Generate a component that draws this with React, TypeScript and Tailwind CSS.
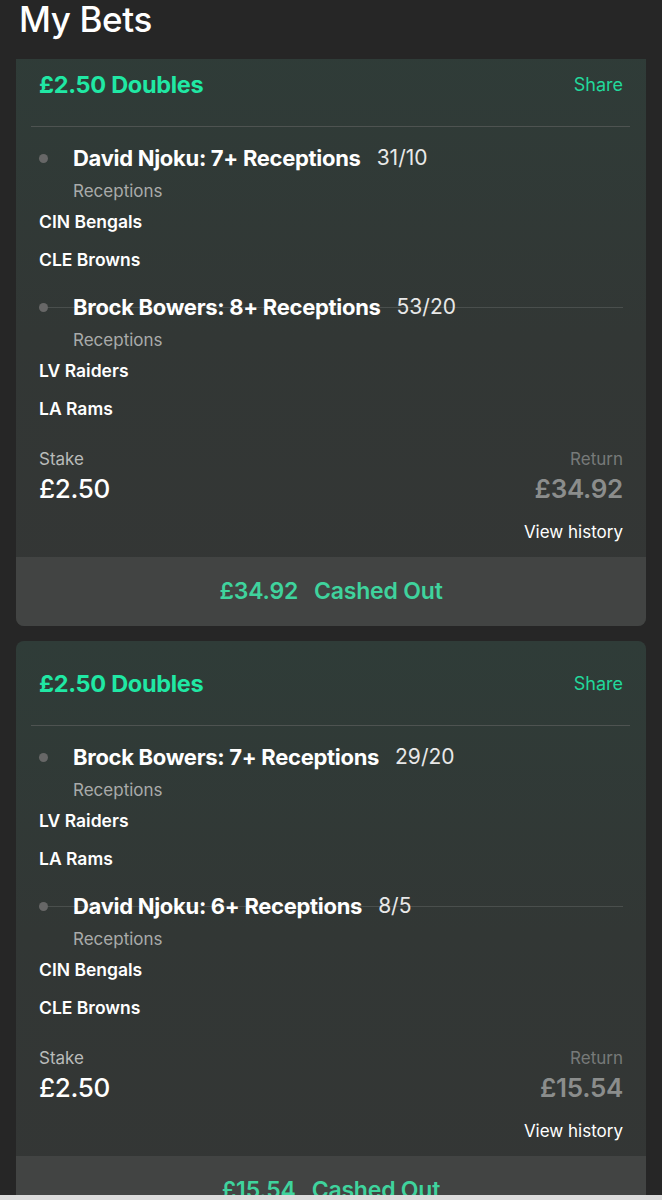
import React from "react"

type Leg = {
  title: string
  odds: string
  market: string
  home: string
  away: string
}

type Bet = {
  stake: string
  ret: string
  legs: Leg[]
}

const bets: Bet[] = [
  {
    stake: "£2.50",
    ret: "£34.92",
    legs: [
      { title: "David Njoku: 7+ Receptions", odds: "31/10", market: "Receptions", home: "CIN Bengals", away: "CLE Browns" },
      { title: "Brock Bowers: 8+ Receptions", odds: "53/20", market: "Receptions", home: "LV Raiders", away: "LA Rams" },
    ],
  },
  {
    stake: "£2.50",
    ret: "£15.54",
    legs: [
      { title: "Brock Bowers: 7+ Receptions", odds: "29/20", market: "Receptions", home: "LV Raiders", away: "LA Rams" },
      { title: "David Njoku: 6+ Receptions", odds: "8/5", market: "Receptions", home: "CIN Bengals", away: "CLE Browns" },
    ],
  },
]

function Selection({ leg, first }: { leg: Leg; first: boolean }) {
  return (
    <div className={first ? "mt-[17px]" : "mt-[21px]"}>
      <div className="relative flex items-center h-[28px]">
        {/* connector line behind the second leg */}
        {!first && (
          <div className="absolute left-[1px] right-0 top-1/2 h-px bg-[#4a4f4d]" />
        )}
        <div className="relative w-[34px] shrink-0">
          <div className="w-[9px] h-[9px] rounded-full bg-[#676767]" />
        </div>
        <span className="relative text-[22px] font-bold text-white leading-[28px] tracking-[-0.3px]">
          {leg.title}
        </span>
        <span className="relative ml-4 text-[21px] text-[#e8e8e8] leading-[28px]">
          {leg.odds}
        </span>
      </div>
      <div className="mt-[7px] pl-[34px] text-[17px] leading-[24px] text-[#a9abaa]">
        {leg.market}
      </div>
      <div className="mt-[7px] text-[17.5px] leading-[24px] font-semibold text-white">
        {leg.home}
      </div>
      <div className="mt-[14px] text-[17.5px] leading-[24px] font-semibold text-white">
        {leg.away}
      </div>
    </div>
  )
}

function BetCard({ bet }: { bet: Bet }) {
  return (
    <div className="rounded-[8px] overflow-hidden bg-gradient-to-b from-[#2f3c38] via-[#323735] to-[#343635]">
      <div className="px-[23px]">
        <div className="pt-[29px] flex items-center justify-between h-[57px]">
          <span className="text-[23.5px] font-bold leading-[28px] text-[#20e8a4] tracking-[-0.3px]">
            £2.50 Doubles
          </span>
          <span className="text-[18px] leading-[28px] text-[#22d89b]">Share</span>
        </div>
        <div className="mt-[27px] -ml-[8px] -mr-[7px] h-px bg-[#4e5351]" />

        {bet.legs.map((leg, i) => (
          <Selection key={i} leg={leg} first={i === 0} />
        ))}

        <div className="mt-[26px] flex justify-between">
          <div>
            <div className="text-[17px] leading-[24px] text-[#b9bbba]">Stake</div>
            <div className="mt-[3px] text-[26px] leading-[30px] font-medium text-white tracking-[-0.3px]">
              {bet.stake}
            </div>
          </div>
          <div className="text-right">
            <div className="text-[17px] leading-[24px] text-[#777a79]">Return</div>
            <div className="mt-[3px] text-[26px] leading-[30px] font-semibold text-[#8b8d8c] tracking-[-0.3px]">
              {bet.ret}
            </div>
          </div>
        </div>
        <div className="mt-[16px] pb-[13px] text-right text-[17px] leading-[24px] text-white">
          View history
        </div>
      </div>
      <div className="h-[69px] bg-[#424443] flex items-center justify-center gap-4 text-[23px] font-semibold text-[#3fd39d] tracking-[-0.2px]">
        <span>{bet.ret}</span>
        <span>Cashed Out</span>
      </div>
    </div>
  )
}

export default function App(): JSX.Element {
  return (
    <div
      className="h-[1200px] overflow-hidden flex flex-col bg-[#262626]"
      style={{ fontFamily: "Inter, Roboto, 'Liberation Sans', sans-serif" }}
    >
      <header className="h-[59px] shrink-0 px-[19px] pt-px">
        <h1 className="text-[35px] leading-[36px] font-medium text-white tracking-[-0.4px]">
          My Bets
        </h1>
      </header>

      <main className="flex-1 overflow-hidden px-4">
        <div className="-mt-[17px] flex flex-col gap-[15px]">
          {bets.map((bet, i) => (
            <BetCard key={i} bet={bet} />
          ))}
        </div>
      </main>

      <div className="h-[5px] shrink-0 bg-[#dcdcdc]" />
    </div>
  )
}
